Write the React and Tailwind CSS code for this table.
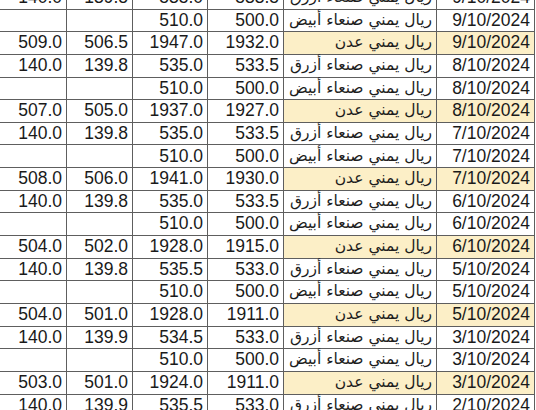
import React from "react";

const AZ = "ريال يمني صنعاء أزرق";
const AB = "ريال يمني صنعاء أبيض";
const AD = "ريال يمني عدن";

const rows = [
  ["140.0", "139.8", "535.0", "533.5", AZ, "9/10/2024"],
  ["", "", "510.0", "500.0", AB, "9/10/2024"],
  ["509.0", "506.5", "1947.0", "1932.0", AD, "9/10/2024"],
  ["140.0", "139.8", "535.0", "533.5", AZ, "8/10/2024"],
  ["", "", "510.0", "500.0", AB, "8/10/2024"],
  ["507.0", "505.0", "1937.0", "1927.0", AD, "8/10/2024"],
  ["140.0", "139.8", "535.0", "533.5", AZ, "7/10/2024"],
  ["", "", "510.0", "500.0", AB, "7/10/2024"],
  ["508.0", "506.0", "1941.0", "1930.0", AD, "7/10/2024"],
  ["140.0", "139.8", "535.0", "533.5", AZ, "6/10/2024"],
  ["", "", "510.0", "500.0", AB, "6/10/2024"],
  ["504.0", "502.0", "1928.0", "1915.0", AD, "6/10/2024"],
  ["140.0", "139.8", "535.5", "533.0", AZ, "5/10/2024"],
  ["", "", "510.0", "500.0", AB, "5/10/2024"],
  ["504.0", "501.0", "1928.0", "1911.0", AD, "5/10/2024"],
  ["140.0", "139.9", "534.5", "533.0", AZ, "3/10/2024"],
  ["", "", "510.0", "500.0", AB, "3/10/2024"],
  ["503.0", "501.0", "1924.0", "1911.0", AD, "3/10/2024"],
  ["140.0", "139.9", "535.5", "533.0", AZ, "2/10/2024"],
];

function Row({ r }) {
  const y = r[4] === AD;
  const cell =
    "h-full flex items-center justify-end border-r border-b border-[#5e5e5e] pr-[4px] box-border";
  const yb = y ? "bg-[#fcefc7]" : "bg-white";
  return (
    <div className="flex h-[22.65px]">
      <div className={cell + " w-[67px] bg-white"}>{r[0]}</div>
      <div className={cell + " w-[66px] bg-white"}>{r[1]}</div>
      <div className={cell + " w-[75px] bg-white"}>{r[2]}</div>
      <div className={cell + " w-[76px] bg-white"}>{r[3]}</div>
      <div className={cell + " w-[153px] pr-[3px] " + yb}>
        <span dir="rtl" className="text-[15.5px] text-[#1d1d1d] [font-family:'DejaVu_Sans',sans-serif]">
          {r[4]}
        </span>
      </div>
      <div className={cell + " w-[98px] " + yb}>{r[5]}</div>
    </div>
  );
}

export default function App() {
  return (
    <div className="w-[536px] h-[410px] overflow-hidden bg-white">
      <div className="mt-[-13px] flex flex-col text-[17.5px] leading-none text-[#1a1a1a] [font-family:'Liberation_Sans',Arial,sans-serif]">
        {rows.map((r, i) => (
          <Row key={i} r={r} />
        ))}
      </div>
    </div>
  );
}
